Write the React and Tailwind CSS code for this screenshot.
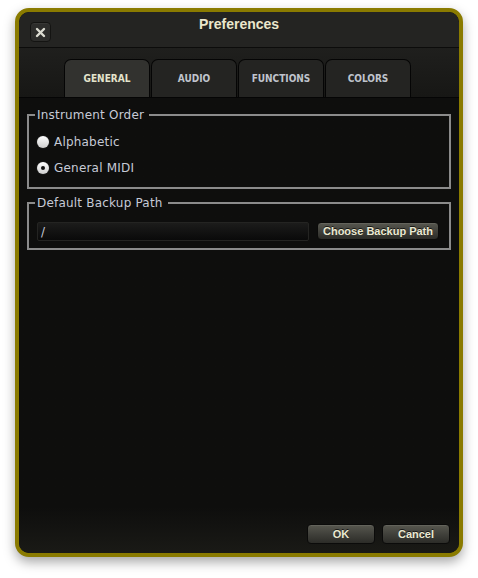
import React, { useState } from 'react';

const TABS = ['GENERAL', 'AUDIO', 'FUNCTIONS', 'COLORS'];

function Radio({ checked, label, onClick }) {
  return (
    <button type="button" onClick={onClick} className="flex h-5 items-center gap-[5px] text-left">
      <span className="flex h-3 w-3 items-center justify-center rounded-full bg-gradient-to-b from-[#ffffff] to-[#cfcfcf] shadow-[0_0_1px_rgba(255,255,255,0.4)]">
        {checked && <span className="h-[4px] w-[4px] rounded-full bg-[#111]" />}
      </span>
      <span>{label}</span>
    </button>
  );
}

function Group({ title, children, className = '' }) {
  return (
    <fieldset className={`border-2 border-[#8b8b8b] ${className}`}>
      <legend className="ml-[6px] pl-[2px] pr-[5px] leading-4">{title}</legend>
      {children}
    </fieldset>
  );
}

function DarkButton({ children, className = '' }) {
  return (
    <button
      type="button"
      className={`rounded-[4px] border border-[#0b0b0a] bg-gradient-to-b from-[#57574f] to-[#2c2c28] font-['Liberation_Sans',sans-serif] text-[11px] font-bold text-[#ebe9d2] shadow-[inset_0_1px_0_rgba(255,255,255,0.08)] [text-shadow:0_-1px_0_rgba(0,0,0,0.7)] ${className}`}
    >
      {children}
    </button>
  );
}

export default function App() {
  const [tab, setTab] = useState('GENERAL');
  const [order, setOrder] = useState('midi');

  return (
    <div className="h-[578px] w-[478px] bg-white pl-[15px] pt-[8px]">
      <div className="flex h-[549px] w-[448px] flex-col overflow-hidden rounded-[14px] border-4 border-[#8a7b00] bg-[#0e0e0d] shadow-[0_5px_12px_rgba(0,0,0,0.35)]">
        {/* title bar */}
        <div className="grid h-[35px] grid-cols-[1fr_auto_1fr] items-start rounded-t-[10px] bg-[#242422] px-[11px]">
          <button
            type="button"
            className="mt-[10px] flex h-5 w-[21px] items-center justify-center rounded-[4px] border border-[#141412] bg-[#2d2d2b] shadow-[inset_0_1px_0_rgba(255,255,255,0.05)]"
            aria-label="Close"
          >
            <svg width="11" height="11" viewBox="0 0 11 11">
              <path d="M2 2 L9 9 M9 2 L2 9" stroke="#dcdcd2" strokeWidth="2.4" strokeLinecap="round" />
            </svg>
          </button>
          <div className="pt-[2px] font-['Liberation_Sans',sans-serif] text-[14px] font-bold leading-5 text-[#ebe7cc]">
            Preferences
          </div>
          <div />
        </div>
        <div className="h-px bg-[#0c0c0b]" />

        {/* tabs */}
        <div className="flex h-[49px] items-end gap-px bg-gradient-to-b from-[#1f1f1d] to-[#171715] pl-[45px]">
          {TABS.map((t) => (
            <button
              key={t}
              type="button"
              onClick={() => setTab(t)}
              className={`flex h-[38px] w-[86px] items-center justify-center rounded-t-[7px] border border-b-0 border-[#050505] font-['DejaVu_Sans_Condensed','DejaVu_Sans',sans-serif] text-[10px] font-bold ${
                tab === t ? 'bg-[#32322f] text-[#e3e3cc]' : 'bg-[#242422] text-[#bfc3cc]'
              }`}
            >
              {t}
            </button>
          ))}
        </div>

        {/* content */}
        <div className="flex flex-1 flex-col border-t border-[#050505] bg-gradient-to-b from-[#0e0e0d] via-[#0e0e0d] via-90% to-[#1a1a16] px-[8px] pb-[9px] font-['DejaVu_Sans',sans-serif] text-[12px] tracking-[0.2px] text-[#c6cad6]">
          <Group title="Instrument Order" className="mt-[9px]">
            <div className="flex flex-col gap-[6px] pb-[9px] pl-[8px] pt-[9px]">
              <Radio label="Alphabetic" checked={order === 'alpha'} onClick={() => setOrder('alpha')} />
              <Radio label="General MIDI" checked={order === 'midi'} onClick={() => setOrder('midi')} />
            </div>
          </Group>

          <Group title="Default Backup Path" className="mt-[6px]">
            <div className="flex items-start gap-[8px] pb-[7px] pl-[8px] pr-[8px] pt-[11px]">
              <div className="flex h-[19px] w-[272px] items-center rounded-[2px] border border-[#242422] bg-gradient-to-b from-[#1c1c1b] to-[#0a0a0a] px-[3px] text-[12px]">
                /
              </div>
              <DarkButton className="h-[18px] w-[122px] tracking-normal">Choose Backup Path</DarkButton>
            </div>
          </Group>

          <div className="mt-auto flex justify-end gap-[7px] pr-px">
            <DarkButton className="h-5 w-[68px] tracking-normal">OK</DarkButton>
            <DarkButton className="h-5 w-[68px] tracking-normal">Cancel</DarkButton>
          </div>
        </div>
      </div>
    </div>
  );
}
